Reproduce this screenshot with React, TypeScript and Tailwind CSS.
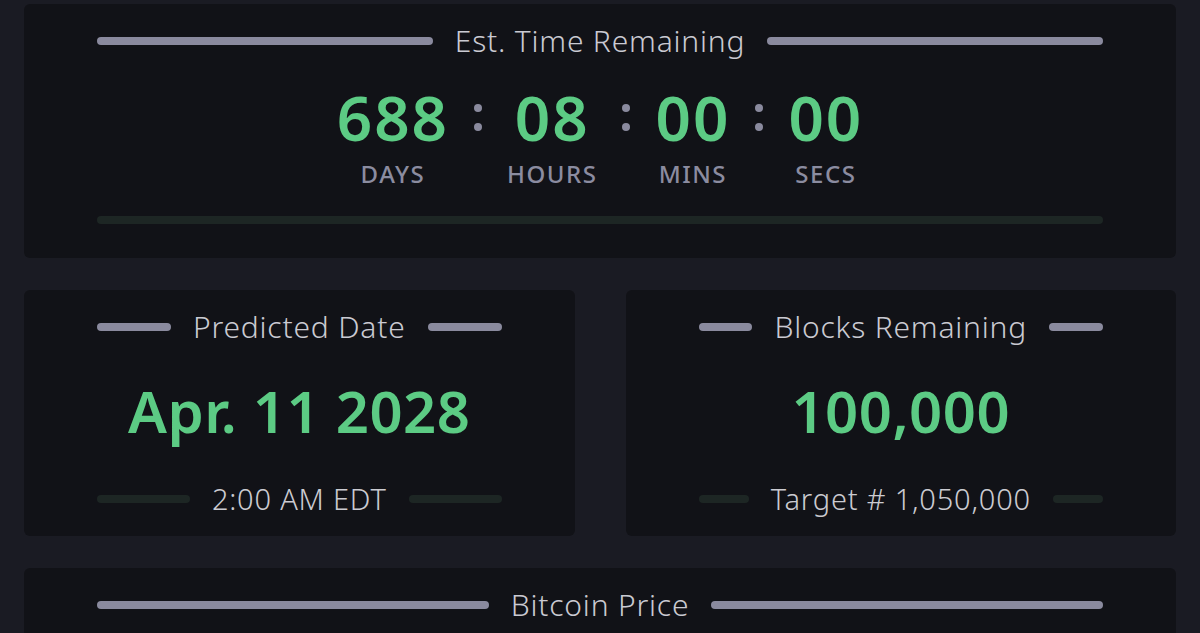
import React from "react";

const font = { fontFamily: '"Noto Sans", "Open Sans", sans-serif' };

const TitleRow = ({ title }: { title: string }) => {
  return (
    <div className="flex flex-row items-center gap-[22px]">
      <div className="flex-1 h-[8px] rounded-full bg-[#8a8a9e]" />
      <div className="text-[30px] leading-[40px] font-light tracking-[0.8px] text-[#cacad2] whitespace-nowrap">{title}</div>
      <div className="flex-1 h-[8px] rounded-full bg-[#8a8a9e]" />
    </div>
  );
};

const SubRow = ({ text }: { text: string }) => {
  return (
    <div className="flex flex-row items-center gap-[22px]">
      <div className="flex-1 h-[8px] rounded-full bg-[#1d2624]" />
      <div className="text-[29px] leading-[40px] font-light tracking-[0.8px] text-[#cbcbd1] whitespace-nowrap">{text}</div>
      <div className="flex-1 h-[8px] rounded-full bg-[#1d2624]" />
    </div>
  );
};

const Colon = () => (
  <div className="h-[64px] w-[8px] flex flex-col justify-center items-center gap-[11px]">
    <div className="w-[8px] h-[8px] rounded-full bg-[#8a8a9e]" />
    <div className="w-[8px] h-[8px] rounded-full bg-[#8a8a9e]" />
  </div>
);

const Unit = ({ value, label }: { value: string; label: string }) => (
  <div className="flex flex-col items-center">
    <div className="text-[62px] leading-[64px] font-semibold text-[#5ccb84] tracking-[2px]">{value}</div>
    <div className="mt-[10px] text-[24px] leading-[30px] font-medium text-[#8b8ca0] tracking-[1.5px]">{label}</div>
  </div>
);

const StatCard = ({ title, value, sub }: { title: string; value: string; sub: string }) => (
  <div className="flex-1 bg-[#111217] rounded-md px-[73px] pt-[17px] pb-[17px]">
    <TitleRow title={title} />
    <div className="mt-[21px] text-center text-[58px] leading-[86px] font-semibold text-[#5ccb84] tracking-[0.5px]">{value}</div>
    <div className="mt-[25px]">
      <SubRow text={sub} />
    </div>
  </div>
);

export default function App() {
  const units = [
    { value: "688", label: "DAYS" },
    { value: "08", label: "HOURS" },
    { value: "00", label: "MINS" },
    { value: "00", label: "SECS" },
  ];

  return (
    <div className="w-[1200px] h-[633px] overflow-hidden bg-[#1a1b23] px-[24px] pt-[4px]" style={font}>
      <div className="bg-[#111217] rounded-md px-[73px] pt-[17px] pb-[34px]">
        <TitleRow title="Est. Time Remaining" />
        <div className="mt-[24px] flex flex-row justify-center items-start gap-[25px]">
          {units.map((u, i) => (
            <React.Fragment key={u.label}>
              {i > 0 && <Colon />}
              <Unit value={u.value} label={u.label} />
            </React.Fragment>
          ))}
        </div>
        <div className="mt-[27px] h-[8px] rounded-full bg-[#1d2624]" />
      </div>

      <div className="mt-[32px] flex flex-row gap-[51px]">
        <StatCard title="Predicted Date" value="Apr. 11 2028" sub="2:00 AM EDT" />
        <StatCard title="Blocks Remaining" value="100,000" sub="Target # 1,050,000" />
      </div>

      <div className="mt-[32px] bg-[#111217] rounded-md px-[73px] pt-[17px] h-[100px]">
        <TitleRow title="Bitcoin Price" />
      </div>
    </div>
  );
}
